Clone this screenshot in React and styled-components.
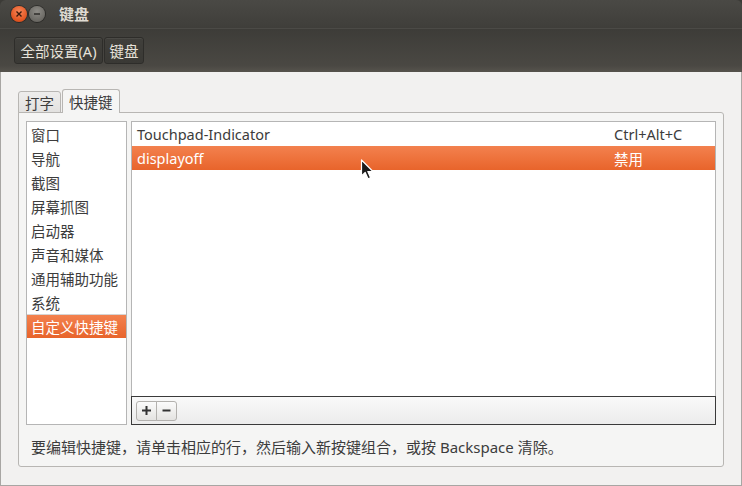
import styled, { createGlobalStyle } from 'styled-components';

const GlobalStyle = createGlobalStyle`
  html, body {
    margin: 0;
    padding: 0;
    background: #3c3b37;
  }
  * { box-sizing: border-box; }
`;

const FONT = `"Noto Sans", "Noto Sans CJK SC", sans-serif`;

const Window = styled.div`
  position: relative;
  width: 742px;
  height: 486px;
  display: flex;
  flex-direction: column;
  font-family: ${FONT};
  font-size: 14.5px;
  color: #3c3c3c;
  border-radius: 6px 6px 0 0;
  overflow: hidden;
`;

const TitleBar = styled.div`
  height: 29px;
  display: flex;
  align-items: center;
  padding-left: 11px;
  background: linear-gradient(#4a4945, #3f3e3a);
  border-bottom: 1px solid #4b4a46;
`;

const WinButton = styled.div`
  width: 16px;
  height: 16px;
  border-radius: 50%;
  margin-right: 2px;
  display: flex;
  align-items: center;
  justify-content: center;
  background: ${p => p.close
    ? 'radial-gradient(circle at 50% 35%, #f8875a, #e0531f 70%, #b8401a)'
    : 'radial-gradient(circle at 50% 35%, #8e8c87, #6b6964 70%, #55534f)'};
  box-shadow: 0 0 0 1px rgba(0,0,0,0.35);
  svg { display: block; }
`;

const Title = styled.div`
  margin-left: 12px;
  color: #dfdbd2;
  font-weight: bold;
  font-size: 15px;
  line-height: 1;
`;

const Toolbar = styled.div`
  height: 43px;
  display: flex;
  align-items: center;
  padding-left: 14px;
  gap: 1px;
  background: linear-gradient(#3d3c38, #4a4843 85%, #56534d);
`;

const Crumb = styled.div`
  height: 27px;
  width: ${p => p.w}px;
  display: flex;
  align-items: center;
  justify-content: center;
  color: #e6e2da;
  font-size: 14.5px;
  background: linear-gradient(#403f3b, #3a3935);
  border: 1px solid #2e2d2a;
  border-radius: 3px;
  box-shadow: inset 0 1px 0 rgba(255,255,255,0.06);
`;

const Body = styled.div`
  flex: 1;
  background: #f2f1f0;
  border: 1px solid #a8a6a3;
  border-top: none;
  padding: 17px 17px 18px 17px;
  display: flex;
  flex-direction: column;
`;

const Tabs = styled.div`
  display: flex;
  align-items: flex-end;
  gap: 1px;
  height: 24px;
  margin-bottom: -1px;
  position: relative;
  z-index: 1;
`;

const Tab = styled.div`
  height: ${p => p.active ? 24 : 22}px;
  padding: 0 6px;
  display: flex;
  align-items: center;
  background: ${p => p.active ? '#f5f5f4' : 'linear-gradient(#eeedec, #e3e2e0)'};
  border: 1px solid #b8b6b3;
  border-bottom: ${p => p.active ? 'none' : '1px solid #b8b6b3'};
  border-radius: 3px 3px 0 0;
  color: #3c3c3c;
`;

const Frame = styled.div`
  flex: 1;
  background: #f5f5f4;
  border: 1px solid #b8b6b3;
  border-radius: 0 3px 3px 3px;
  padding: 8px 7px 0 7px;
  display: flex;
  flex-direction: column;
`;

const Panes = styled.div`
  height: 304px;
  display: flex;
  gap: 4px;
`;

const CategoryList = styled.div`
  width: 101px;
  background: #fff;
  border: 1px solid #b5b5b5;
  display: flex;
  flex-direction: column;
`;

const Category = styled.div`
  height: 24px;
  display: flex;
  align-items: center;
  padding-left: 4px;
  white-space: nowrap;
  color: ${p => p.selected ? '#fff' : '#3c3c3c'};
  background: ${p => p.selected ? 'linear-gradient(#f3814e, #e8642b)' : 'transparent'};
  border-top: ${p => p.selected ? '1px solid #d6d4d2' : 'none'};
`;

const ShortcutPane = styled.div`
  flex: 1;
  display: flex;
  flex-direction: column;
`;

const ShortcutList = styled.div`
  flex: 1;
  background: #fff;
  border: 1px solid #b5b5b5;
  border-bottom: none;
`;

const Row = styled.div`
  height: 24px;
  display: flex;
  align-items: center;
  padding-left: 5px;
  color: ${p => p.selected ? '#fff' : '#3c3c3c'};
  background: ${p => p.selected ? 'linear-gradient(#f3814e, #e8642b)' : 'transparent'};
`;

const Name = styled.div`
  flex: 1;
`;

const Accel = styled.div`
  width: 101px;
`;

const ListToolbar = styled.div`
  height: 29px;
  border: 1px solid #3a3a3a;
  background: linear-gradient(#f9f9f9, #ececec);
  display: flex;
  align-items: center;
  padding-left: 4px;
`;

const SmallButton = styled.div`
  width: 21px;
  height: 20px;
  display: flex;
  align-items: center;
  justify-content: center;
  background: linear-gradient(#fbfbfb, #e4e3e1);
  border: 1px solid #b3b1ae;
  border-radius: ${p => p.first ? '3px 0 0 3px' : '0 3px 3px 0'};
  margin-left: ${p => p.first ? '0' : '-1px'};
  svg { display: block; }
`;

const Help = styled.div`
  padding: 11px 0 0 5px;
  color: #3c3c3c;
  white-space: nowrap;
  font-size: 15px;
`;

const Pointer = styled.svg`
  position: absolute;
  left: 360px;
  top: 159px;
`;

const categories = ['窗口', '导航', '截图', '屏幕抓图', '启动器', '声音和媒体', '通用辅助功能', '系统', '自定义快捷键'];

const shortcuts = [
  { name: 'Touchpad-Indicator', accel: 'Ctrl+Alt+C' },
  { name: 'displayoff', accel: '禁用', selected: true },
];

export default function App() {
  return (
    <>
      <GlobalStyle />
      <Window>
        <TitleBar>
          <WinButton close>
            <svg width="8" height="8" viewBox="0 0 8 8">
              <path d="M1.5 1.5 L6.5 6.5 M6.5 1.5 L1.5 6.5" stroke="#3a1a0c" strokeWidth="1.4" />
            </svg>
          </WinButton>
          <WinButton>
            <svg width="8" height="8" viewBox="0 0 8 8">
              <path d="M1 4 H7" stroke="#2e2d2a" strokeWidth="1.4" />
            </svg>
          </WinButton>
          <Title>键盘</Title>
        </TitleBar>
        <Toolbar>
          <Crumb w={89}>全部设置(A)</Crumb>
          <Crumb w={40}>键盘</Crumb>
        </Toolbar>
        <Body>
          <Tabs>
            <Tab>打字</Tab>
            <Tab active>快捷键</Tab>
          </Tabs>
          <Frame>
            <Panes>
              <CategoryList>
                {categories.map((c, i) => (
                  <Category key={c} selected={i === categories.length - 1}>{c}</Category>
                ))}
              </CategoryList>
              <ShortcutPane>
                <ShortcutList>
                  {shortcuts.map(s => (
                    <Row key={s.name} selected={s.selected}>
                      <Name>{s.name}</Name>
                      <Accel>{s.accel}</Accel>
                    </Row>
                  ))}
                </ShortcutList>
                <ListToolbar>
                  <SmallButton first>
                    <svg width="11" height="11" viewBox="0 0 11 11">
                      <path d="M5.5 1 V10 M1 5.5 H10" stroke="#333" strokeWidth="2" />
                    </svg>
                  </SmallButton>
                  <SmallButton>
                    <svg width="11" height="11" viewBox="0 0 11 11">
                      <path d="M1.5 5.5 H9.5" stroke="#333" strokeWidth="2" />
                    </svg>
                  </SmallButton>
                </ListToolbar>
              </ShortcutPane>
            </Panes>
            <Help>要编辑快捷键，请单击相应的行，然后输入新按键组合，或按 Backspace 清除。</Help>
          </Frame>
        </Body>
        <Pointer width="15" height="22" viewBox="0 0 15 22">
          <path d="M1.5 1 L1.5 17 L5.2 13.4 L8 19.8 L10.6 18.7 L7.8 12.5 L13 12.5 Z"
            fill="#1a1a1a" stroke="#fff" strokeWidth="1.2" strokeLinejoin="round" />
        </Pointer>
      </Window>
    </>
  );
}
